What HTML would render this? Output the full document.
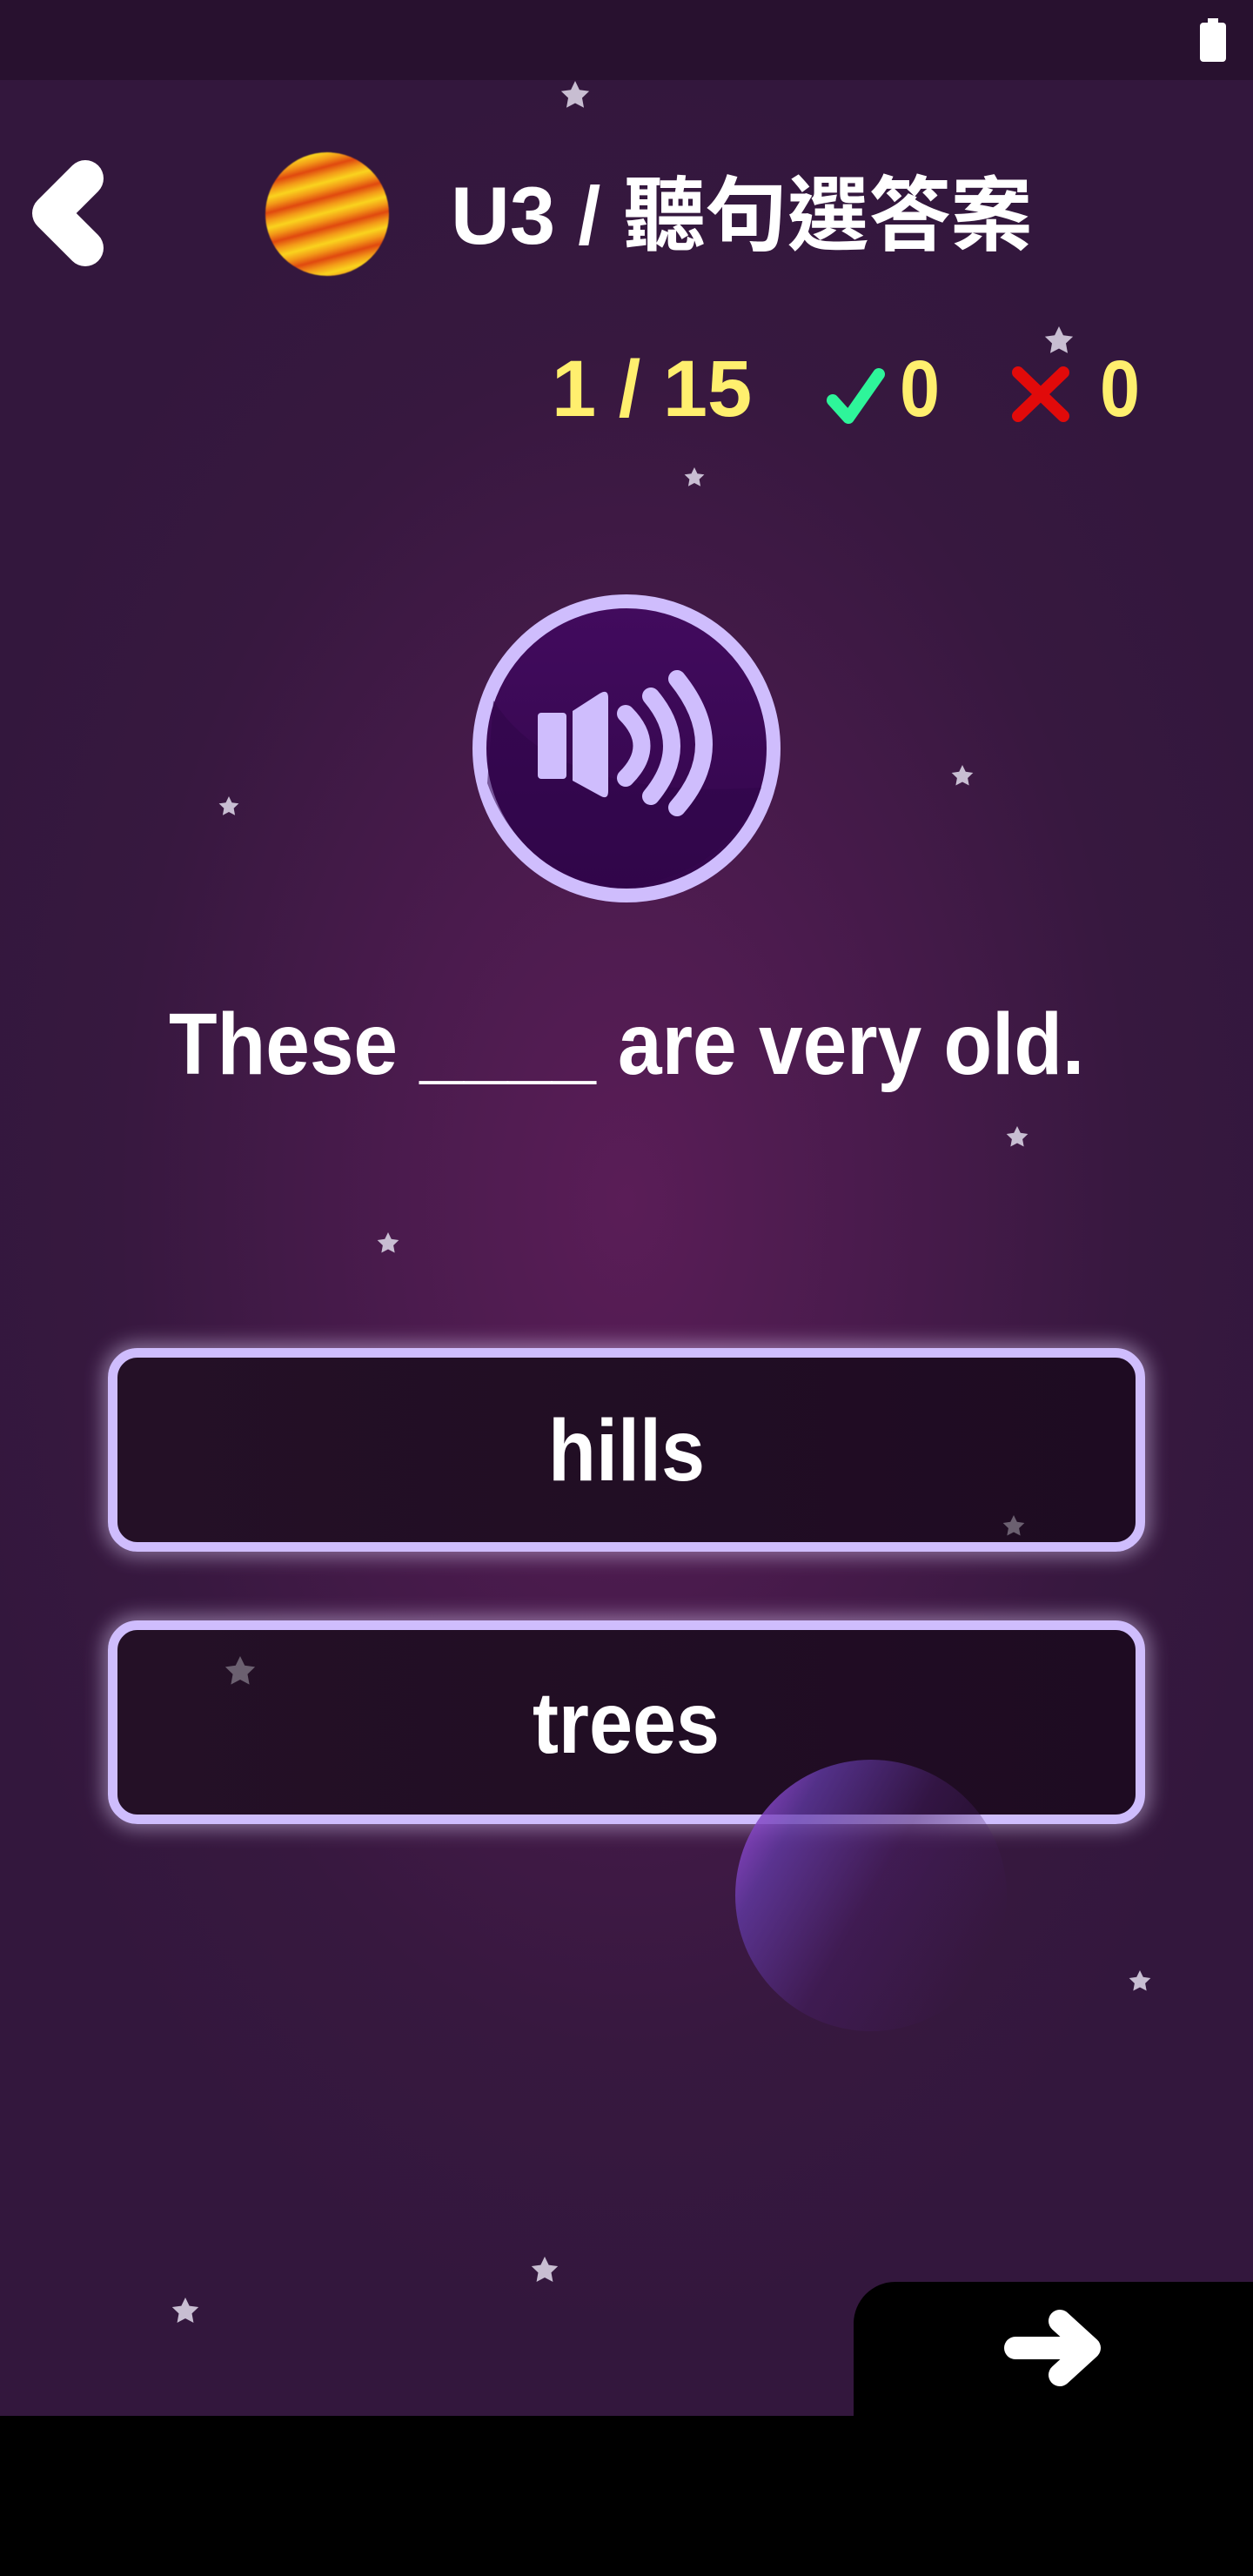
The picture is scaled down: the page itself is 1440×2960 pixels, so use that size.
<!DOCTYPE html>
<html><head><meta charset="utf-8"><style>
html,body{margin:0;padding:0;}
body{width:1440px;height:2960px;position:relative;overflow:hidden;font-family:"Liberation Sans","Noto Sans CJK TC",sans-serif;font-weight:bold;
background:radial-gradient(ellipse 780px 1300px at 720px 1380px,#5a1d57 0%,#4a1b4d 35%,#37183f 75%,#33173d 100%);}
.abs{position:absolute;}
.status{left:0;top:0;width:1440px;height:92px;background:#28112f;}
.txt{white-space:nowrap;color:#fff;}
.btn{position:absolute;left:124px;width:1192px;box-sizing:border-box;border:11px solid #cfbdfd;border-radius:34px;background:linear-gradient(90deg,#241026,#1e0b22);box-shadow:0 0 22px 6px rgba(230,215,255,0.45);}
.btnt{position:absolute;left:0;width:100%;text-align:center;font-size:100px;color:#fff;}
.btnt span{display:inline-block;transform:scaleX(0.9);}
</style></head><body>
<div class="abs status"></div>
<svg class="abs" style="left:1376px;top:18px" width="36" height="56"><rect x="12" y="3" width="12" height="8" fill="#fff"/><rect x="3" y="8" width="30" height="45" rx="4" fill="#fff"/></svg>

<!-- back -->
<svg class="abs" style="left:0;top:160px" width="160" height="160"><path d="M98,45 L58,85 L98,125" stroke="#fff" stroke-width="42" stroke-linecap="round" stroke-linejoin="round" fill="none"/></svg>

<!-- sun planet -->
<div class="abs" style="left:305px;top:175px;width:142px;height:142px;border-radius:50%;background:repeating-linear-gradient(165deg,#e0480f 0px,#f39a18 9px,#fad41e 17px,#f39a18 25px,#e0480f 34px);filter:blur(0.6px)"></div>

<div class="abs txt" style="left:518px;top:188px;font-size:94px;line-height:120px;">U3 / 聽句選答案</div>

<!-- score -->
<div class="abs txt" style="left:634px;top:392px;font-size:92px;line-height:110px;color:#ffef6e">1 / 15</div>
<svg class="abs" style="left:945px;top:420px" width="80" height="70"><path d="M12,40 L30,60 L65,10" stroke="#2ef59a" stroke-width="14" stroke-linecap="round" stroke-linejoin="round" fill="none"/></svg>
<div class="abs txt" style="left:1034px;top:392px;font-size:92px;line-height:110px;color:#ffef6e"><span style="display:inline-block;transform:scaleX(0.9);transform-origin:left">0</span></div>
<svg class="abs" style="left:1160px;top:420px" width="72" height="66"><path d="M10,8 L62,58 M62,8 L10,58" stroke="#e10a0a" stroke-width="14" stroke-linecap="round" fill="none"/></svg>
<div class="abs txt" style="left:1264px;top:392px;font-size:92px;line-height:110px;color:#ffef6e"><span style="display:inline-block;transform:scaleX(0.9);transform-origin:left">0</span></div>

<!-- speaker -->
<svg class="abs" style="left:520px;top:660px" width="400" height="400">
<defs><linearGradient id="g" x1="0" y1="0" x2="0" y2="1"><stop offset="0" stop-color="#420b5e"/><stop offset="1" stop-color="#32064b"/></linearGradient></defs>
<circle cx="200" cy="200" r="169" fill="url(#g)" stroke="#cfbdfd" stroke-width="16"/>
<path d="M47,145 Q120,260 355,245 Q320,340 200,360 Q80,350 40,240 Z" fill="#2f0548" opacity="0.55"/>
<rect x="98" y="159" width="33" height="76" rx="4" fill="#cfbdfd"/>
<path d="M138,157 L169,137 Q179,131 179,142 L179,249 Q179,260 169,254 L138,237 Z" fill="#cfbdfd"/>
<g stroke="#cfbdfd" stroke-width="20" stroke-linecap="round" fill="none">
<path d="M199,160 Q236,197 199,234"/>
<path d="M228,140 Q276,197 228,255"/>
<path d="M258,120 Q320,197 258,268"/>
</g></svg>

<div class="abs txt" style="left:0;width:1440px;text-align:center;top:1140px;font-size:100px;line-height:120px;"><span style="display:inline-block;transform:scaleX(0.91)">These ____ are very old.</span></div>

<div class="btn" style="top:1549px;height:234px;"><div class="btnt" style="top:47px;line-height:120px"><span>hills</span></div></div>
<div class="btn" style="top:1862px;height:234px;"><div class="btnt" style="top:47px;line-height:120px"><span>trees</span></div></div>

<!-- purple planet -->
<div class="abs" style="left:845px;top:2022px;width:312px;height:312px;border-radius:50%;background:linear-gradient(120deg,rgba(170,80,230,0.95) 0%,rgba(100,60,170,0.75) 22%,rgba(70,30,100,0.5) 50%,rgba(60,25,70,0) 85%);"></div>

<!-- stars -->
<svg class="abs" style="left:0;top:0" width="1440" height="2960">
<defs><path id="s" d="M0,-10 L2.9,-4 L9.5,-3.1 L4.7,1.5 L5.9,8.1 L0,5 L-5.9,8.1 L-4.7,1.5 L-9.5,-3.1 L-2.9,-4 Z"/></defs>
<g fill="#c8bed2">
<use href="#s" transform="translate(661,110) scale(1.7)"/>
<use href="#s" transform="translate(1217,392) scale(1.7)"/>
<use href="#s" transform="translate(798,549) scale(1.2)"/>
<use href="#s" transform="translate(263,927) scale(1.2)"/>
<use href="#s" transform="translate(1106,892) scale(1.3)"/>
<use href="#s" transform="translate(1169,1307) scale(1.3)"/>
<use href="#s" transform="translate(446,1429) scale(1.3)"/>
<use href="#s" transform="translate(1310,2277) scale(1.3)"/>
<use href="#s" transform="translate(626,2609) scale(1.6)"/>
<use href="#s" transform="translate(213,2656) scale(1.6)"/>
</g>
<g fill="#6b6070">
<use href="#s" transform="translate(1165,1754) scale(1.3)"/>
<use href="#s" transform="translate(276,1921) scale(1.8)"/>
</g></svg>

<!-- bottom -->
<div class="abs" style="left:0;top:2776px;width:1440px;height:184px;background:#000"></div>
<div class="abs" style="left:981px;top:2622px;width:459px;height:200px;background:#000;border-top-left-radius:48px"></div>
<svg class="abs" style="left:1150px;top:2645px" width="120" height="105"><path d="M17,53 L100,53 M68,22 L102,53 L68,84" stroke="#fff" stroke-width="26" stroke-linecap="round" stroke-linejoin="round" fill="none"/></svg>
</body></html>
